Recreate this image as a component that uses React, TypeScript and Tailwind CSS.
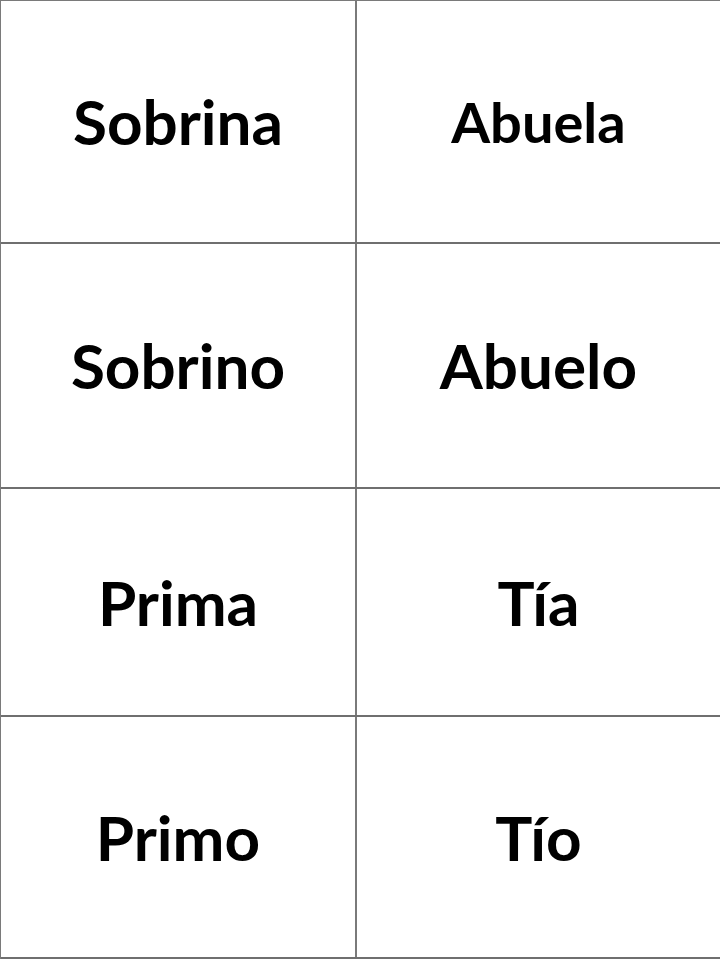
const rows: { left: string; right: string; rightSize?: string; h: string }[] = [
  { left: "Sobrina", right: "Abuela", rightSize: "text-[56px]", h: "h-[243px]" },
  { left: "Sobrino", right: "Abuelo", h: "h-[245px]" },
  { left: "Prima", right: "Tía", h: "h-[228px]" },
  { left: "Primo", right: "Tío", h: "h-[242px]" },
];

export default function App() {
  return (
    <div className="h-[960px] w-[720px] bg-white" style={{ fontFamily: "Lato, 'Open Sans', sans-serif" }}>
      <div className="border-t border-l border-[#7a7a7a]">
        {rows.map((row) => (
          <div key={row.left} className={`flex ${row.h} border-b-2 border-[#6f6f6f]`}>
            <div className="flex w-[356px] items-center justify-center border-r-2 border-[#7a7a7a]">
              <span className="text-[62px] font-bold text-black">{row.left}</span>
            </div>
            <div className="flex flex-1 items-center justify-center">
              <span className={`${row.rightSize ?? "text-[62px]"} font-bold text-black`}>{row.right}</span>
            </div>
          </div>
        ))}
      </div>
    </div>
  );
}
